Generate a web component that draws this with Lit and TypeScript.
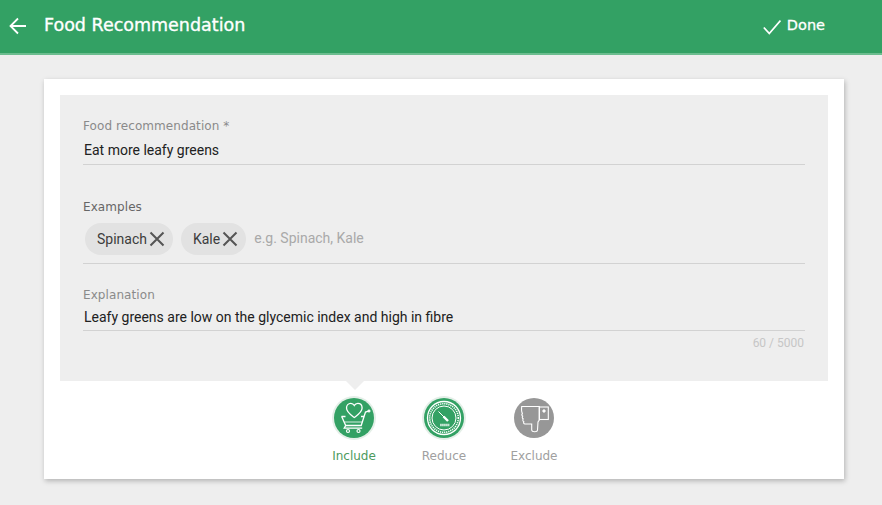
import { LitElement, html, css, svg } from "lit";
import { customElement } from "lit/decorators.js";

const heart = svg`<path d="M20.300 19.500c-3.500-2.500-7.800-5.200-7.800-9.400 0-2.900 2-4.800 4.300-4.800 1.600 0 2.800.9 3.500 2.200.7-1.300 1.900-2.200 3.500-2.200 2.400 0 4.300 1.900 4.300 4.800 0 4.200-4.300 6.900-7.800 9.400z" stroke-width="1.300"/>
<path d="M7.500 18.500h4M27 18.500h3" stroke-width="1.300"/><path d="M7.700 18.500l4 9h15.500L31.500 14l3-.8" stroke-width="1.300"/><path d="M10.500 24h17.500" stroke-width=".8"/><path d="M11.700 27.500l-1.500 2.700h18" stroke-width="1.300"/><circle cx="14" cy="33" r="1.500" stroke-width="1.200"/><circle cx="24.500" cy="33" r="1.500" stroke-width="1.200"/><circle cx="35" cy="13" r="1.100" fill="#fff"/>`;

const gauge = svg`<circle cx="20" cy="20" r="16.500" stroke-width="1.300"/><circle cx="20" cy="20" r="14.300" stroke-width="1.600" stroke-dasharray="1.200 .9"/><circle cx="20" cy="20" r="12" stroke-width="1"/><path d="M14.500 13.500l6 6" stroke-width="1"/><path d="M19.500 18.500l4.500 4.500" stroke-width="2.400"/><path d="M16.300 27h9" stroke-width="2.600" stroke-dasharray="1.300 .7"/>`;

const thumb = svg`<path d="M7.700 8.500h17.600v13.500l-1.300 2-.5 8c-.2 2.300-5.500 2.300-5.800 0v-6H11c-1.300 0-1.700-1.300-1.200-2.300-1-.5-1.300-1.800-.6-2.700-1-.6-1.200-1.900-.5-2.800-1-.8-1-2-.3-2.900-.9-1.400-1-4-.7-6.800z" stroke-width="1.100"/><rect x="25.300" y="9" width="9" height="12.500" stroke-width="1.100"/><circle cx="30" cy="13" r="1.200" fill="#fff"/>`;

@customElement("app-root")
export class AppRoot extends LitElement {
  static styles = css`
    :host { display: block; width: 882px; height: 505px; background: #eeeeee; overflow: hidden; font-family: Roboto, sans-serif; }
    .bar { height: 53px; background: #33a164; border-bottom: 2px solid #6cbd8f; display: flex; align-items: center; color: #fff; font-family: "DejaVu Sans", sans-serif; font-weight: 400; }
    .back { margin-left: 9px; width: 18px; height: 18px; margin-bottom: 2px; }
    .title { margin-left: 17px; font-size: 17.500px; flex: 1; white-space: nowrap; margin-bottom: 3px; -webkit-text-stroke: .35px #fff; }
    .check { width: 18px; height: 16px; margin-right: 6px; }
    .done { font-size: 14.500px; margin-right: 57px; margin-bottom: 3px; -webkit-text-stroke: .3px #fff; }
    .card { margin: 24px 38px 0 44px; height: 400px; background: #fff; box-shadow: 1px 2px 5px rgba(0,0,0,.25); padding: 16px 16px 0; box-sizing: border-box; }
    .panel { height: 286px; background: #eeeeee; padding: 0 23px; box-sizing: border-box; display: flex; flex-direction: column; }
    label { display: block; font-family: "DejaVu Sans", sans-serif; font-size: 12px; letter-spacing: .08px; color: #8a8a8a; line-height: 14px; white-space: nowrap; }
    label.dark { color: #666; }
    .value { font-size: 14px; color: #212121; line-height: 18px; padding-left: 1px; }
    .rule { border-bottom: 1px solid #d2d2d2; }
    .f1 { margin-top: 24px; }
    .f1 .value { margin-top: 8px; padding-bottom: 5px; }
    .f2 { margin-top: 35px; }
    .chips { display: flex; align-items: center; gap: 8px; margin-top: 9px; padding: 0 2px 8px; }
    .chip { height: 32px; border-radius: 16px; background: #e2e2e2; display: flex; align-items: center; padding: 0 8px 0 12px; font-size: 14px; color: #3c3c3c; }
    .chip svg { width: 16px; height: 16px; margin-left: 2px; }
    .hint { font-size: 14px; color: #a9a9a9; margin-bottom: 2px; }
    .f3 { margin-top: 24px; }
    .f3 .value { margin-top: 6px; padding-bottom: 4px; }
    .count { font-size: 12px; color: #c6c6c6; text-align: right; margin-top: 5px; padding-right: 1px; }
    .opts { display: flex; justify-content: center; gap: 41px; margin-top: 17px; position: relative; }
    .notch { position: absolute; left: 286px; top: -17px; width: 0; height: 0; border: 9px solid transparent; border-top-color: #eee; border-bottom: 0; }
    .opt { display: flex; flex-direction: column; align-items: center; width: 49px; font-family: "DejaVu Sans", sans-serif; font-size: 12px; color: #a0a0a0; white-space: nowrap; }
    .opt.on { color: #4c9a5e; }
    .ic { width: 40px; height: 40px; border-radius: 50%; background: #33a164; box-shadow: 0 0 0 2px #e4efe8; margin-bottom: 11px; }
    .ic.grey { background: #979797; box-shadow: none; }
    .ic svg { width: 40px; height: 40px; display: block; fill: none; stroke: #fff; stroke-width: 1; }
  `;

  private x() {
    return html`<svg viewBox="0 0 16 16" fill="none" stroke="#555" stroke-width="2"><path d="M1.500 1.500l13 13M14.500 1.500l-13 13"/></svg>`;
  }

  render() {
    return html`
      <div class="bar">
        <svg class="back" viewBox="0 0 18 18" fill="none" stroke="#fff" stroke-width="1.800"><path d="M17 9H2M9 1.500L1.500 9 9 16.500"/></svg>
        <div class="title">Food Recommendation</div>
        <svg class="check" viewBox="0 0 18 16" fill="none" stroke="#fff" stroke-width="1.800"><path d="M.8 8.500l5.500 6L17.500 1.500"/></svg>
        <div class="done">Done</div>
      </div>
      <div class="card">
        <div class="panel">
          <div class="f1 rule">
            <label>Food recommendation *</label>
            <div class="value">Eat more leafy greens</div>
          </div>
          <div class="f2 rule">
            <label class="dark">Examples</label>
            <div class="chips">
              <div class="chip">Spinach${this.x()}</div>
              <div class="chip">Kale${this.x()}</div>
              <div class="hint">e.g. Spinach, Kale</div>
            </div>
          </div>
          <div class="f3">
            <div class="rule">
              <label>Explanation</label>
              <div class="value">Leafy greens are low on the glycemic index and high in fibre</div>
            </div>
            <div class="count">60 / 5000</div>
          </div>
        </div>
        <div class="opts">
          <div class="notch"></div>
          <div class="opt on"><div class="ic"><svg viewBox="0 0 40 40">${heart}</svg></div>Include</div>
          <div class="opt"><div class="ic"><svg viewBox="0 0 40 40">${gauge}</svg></div>Reduce</div>
          <div class="opt"><div class="ic grey"><svg viewBox="0 0 40 40">${thumb}</svg></div>Exclude</div>
        </div>
      </div>
    `;
  }
}
